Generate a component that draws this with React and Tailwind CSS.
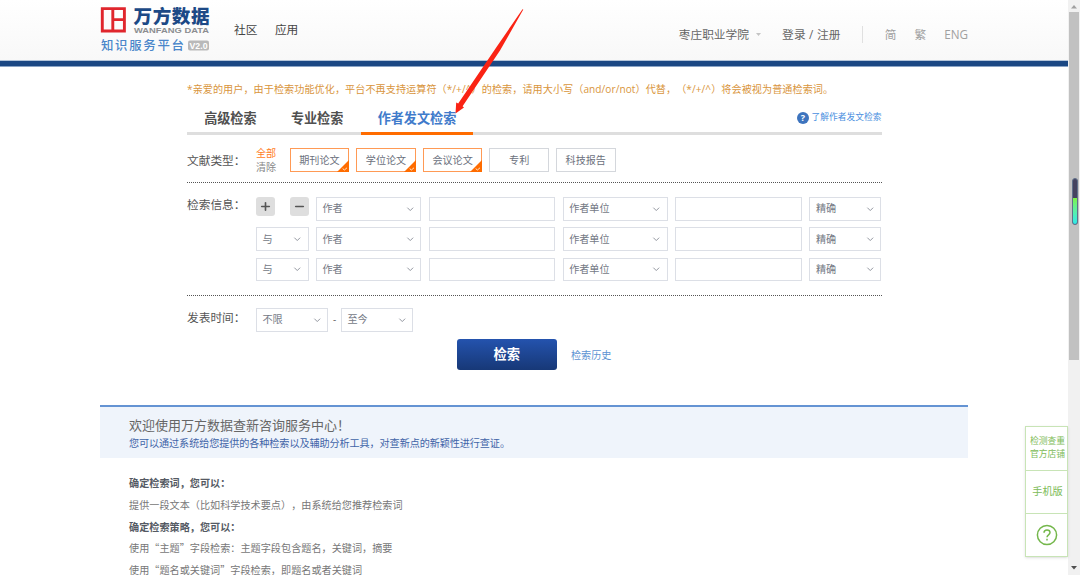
import React, { useState } from "react";
import { ChevronDown, Plus, Minus } from "lucide-react";

const docTypes = [
  { name: "期刊论文", checked: true },
  { name: "学位论文", checked: true },
  { name: "会议论文", checked: true },
  { name: "专利", checked: false },
  { name: "科技报告", checked: false },
];

const tabs = ["高级检索", "专业检索", "作者发文检索"];

const helpLines = [
  { text: "确定检索词，您可以：", bold: true },
  { text: "提供一段文本（比如科学技术要点），由系统给您推荐检索词" },
  { text: "确定检索策略，您可以：", bold: true },
  { text: "使用“主题”字段检索：主题字段包含题名，关键词，摘要" },
  { text: "使用“题名或关键词”字段检索，即题名或者关键词" },
];

const Logo = () => (
  <svg width="112" height="48" viewBox="0 0 112 48" className="shrink-0 overflow-visible">
    <path d="M2.3 2.6H24.4V25H2.3Z M12.8 2.6V25 M12.8 13.6H24.4" fill="none" stroke="#e0262d" strokeWidth="2.9" />
    <text x="33.5" y="16.6" fontSize="18.6" fontWeight="900" textLength="76" fill="#1c4986" fontFamily="Noto Sans CJK SC, sans-serif">万方数据</text>
    <text x="34" y="26.6" fontSize="7.8" fontWeight="700" textLength="75" lengthAdjust="spacingAndGlyphs" fill="#8b8d90" fontFamily="Liberation Sans, sans-serif">WANFANG DATA</text>
    <text x="1" y="43.5" fontSize="12.4" fontWeight="500" textLength="83" fill="#4a86ca" fontFamily="Noto Sans CJK SC, sans-serif">知识服务平台</text>
    <rect x="88" y="34.5" width="21" height="10" rx="2" fill="#b9b9b9" />
    <text x="89.5" y="42.8" fontSize="9" fontWeight="700" textLength="18" lengthAdjust="spacingAndGlyphs" fill="#fff" fontFamily="Liberation Sans, sans-serif">V2.0</text>
  </svg>
);

const Header = () => (
  <header className="h-[67px] shrink-0 border-b border-[#8aa4c6] bg-[#1b4884]">
    <div className="flex h-[61px] border-b border-[#b3c4d9] bg-gradient-to-b from-white to-[#f8f8f8] pl-[100px] text-[11.7px] leading-[18px]">
      <div className="pt-[6px]">
        <Logo />
      </div>
      <nav className="flex gap-[17.5px] pl-[22px] pt-[20px] text-[#444]">
        <a>社区</a>
        <a>应用</a>
      </nav>
      <div className="ml-auto flex items-start pr-[100px] pt-[25px] text-[#666]">
        <span>枣庄职业学院</span>
        <svg width="5" height="3" className="ml-[7px] mt-[8px]">
          <path d="M0 0H5L2.5 3Z" fill="#c4c4c4" />
        </svg>
        <span className="ml-[21px] whitespace-pre tracking-[0.25px]">登录 / 注册</span>
        <span className="ml-[21px] mt-[1px] h-[17px] w-px bg-[#e0e0e0]" />
        <span className="ml-[22px] text-[#a0a0a0]">简</span>
        <span className="ml-[18px] text-[#a0a0a0]">繁</span>
        <span className="ml-[18px] text-[#a0a0a0]">ENG</span>
      </div>
    </div>
  </header>
);

const Select = ({ value, className }) => (
  <div className={`flex h-[23.5px] shrink-0 items-center justify-between border border-[#dcdfe6] bg-white pl-[5.5px] pr-[5px] text-[#747985] ${className}`}>
    <span>{value}</span>
    <ChevronDown size={10.5} strokeWidth={2.2} className="text-[#8f939c]" />
  </div>
);

const TextInput = () => <input className="block h-[23.5px] w-[126.5px] shrink-0 border border-[#dcdfe6] bg-white px-2 outline-none" />;

const DocType = ({ name, checked, onClick }) => (
  <button
    onClick={onClick}
    className={`relative h-[24px] w-[59.8px] border bg-white pt-px text-[#6b707c] ${checked ? "border-[#ff9a55]" : "border-[#d4d7dc]"}`}
  >
    {name}
    {checked && (
      <svg width="12" height="12" viewBox="0 0 12 12" className="absolute -bottom-px -right-px">
        <path d="M12 0V12H0Z" fill="#ff6c00" />
        <path d="M5.7 8.6L7.4 10L10 7.8" fill="none" stroke="#fff" strokeWidth="0.8" />
      </svg>
    )}
  </button>
);

const Label = ({ children }) => <div className="w-[69px] shrink-0 text-[11.7px] leading-[18px] text-[#555]">{children}</div>;

const Scrollbar = () => (
  <div className="relative flex w-[12px] shrink-0 flex-col items-center justify-between bg-[#f1f1f1] py-[5px]">
    <svg width="6" height="4"><path d="M0 3.5L3 0L6 3.5Z" fill="#a0a0a0" /></svg>
    <svg width="6" height="4"><path d="M0 0L3 3.5L6 0Z" fill="#505050" /></svg>
    <div className="absolute left-[1px] top-[12px] h-[348px] w-[10px] bg-[#c1c1c1]" />
    <div className="absolute left-[4px] top-[178px] h-[47px] w-[6px] overflow-hidden rounded-full border border-[#60708a] bg-[#45435f]">
      <div className="mt-[19px] h-[27px] bg-gradient-to-b from-[#7cf43e] to-[#28e8ee]" />
    </div>
  </div>
);

const SideTools = () => (
  <aside className="absolute right-[12px] top-[426px] w-[43px] border border-[#c8e4b6] bg-white text-center text-[#7dbb58] shadow-sm">
    <div className="flex h-[43px] flex-col justify-center pb-[2px] pl-[2px] text-[8.8px] leading-[13px]">
      <span>检测查重</span>
      <span>官方店铺</span>
    </div>
    <div className="flex h-[43px] items-center justify-center border-t border-[#c8e4b6] pb-px pl-[2px] text-[10.2px]">手机版</div>
    <div className="flex h-[43px] items-center justify-center border-t border-[#c8e4b6] pl-px">
      <svg width="22" height="22" viewBox="0 0 22 22" fill="none" stroke="#74b74b" strokeWidth="1.5">
        <circle cx="11" cy="11" r="9.6" />
        <path d="M8 8.8C8 7 9.2 6 11 6S14 7 14 8.6C14 10.8 11 10.9 11 13.3" />
        <path d="M11 14.8V16.5" />
      </svg>
    </div>
  </aside>
);

export default function App() {
  const [types, setTypes] = useState(docTypes);
  const [activeTab, setActiveTab] = useState(2);

  const toggleType = (index) => {
    setTypes((prev) => prev.map((t, i) => (i === index ? { ...t, checked: !t.checked } : t)));
  };

  return (
    <div className="relative flex h-[575px] w-[1080px] overflow-hidden bg-white font-['Open_Sans','Noto_Sans_CJK_SC',sans-serif] text-[10.1px] [text-spacing-trim:space-all]">
      <div className="flex min-w-0 flex-1 flex-col">
        <Header />

        <main className="ml-[187px] h-[338px] w-[694.5px] shrink-0 whitespace-nowrap">
          <p className="pb-px pt-[14px] leading-[16px] tracking-[0.07px] text-[#d9953c]">
            *亲爱的用户，由于检索功能优化，平台不再支持运算符（*/+/^）的检索，请用大小写（and/or/not）代替，（*/+/^）将会被视为普通检索词。
          </p>

          {/* Tabs */}
          <div className="flex h-[37px] border-b-[3px] border-[#dedede]">
            {tabs.map((tab, i) => (
              <button
                key={tab}
                onClick={() => setActiveTab(i)}
                className={`-mb-[3px] flex h-[37px] items-start border-b-[3px] px-[17.2px] pt-[11px] text-[13.1px] font-bold leading-[19px] ${
                  activeTab === i ? "border-[#ff6c00] text-[#3f7bcb]" : "border-transparent text-[#505050]"
                }`}
              >
                {tab}
              </button>
            ))}
            <a className="ml-auto flex items-center gap-[3px] pt-[6px] text-[8.75px] text-[#4b8fe0]">
              <svg width="12" height="12" viewBox="0 0 12 12">
                <circle cx="6" cy="6" r="6" fill="#3d74be" />
                <text x="6" y="9.2" textAnchor="middle" fontSize="9" fontWeight="700" fill="#fff">?</text>
              </svg>
              了解作者发文检索
            </a>
          </div>

          {/* Document types */}
          <div className="flex h-[48px] items-start border-b border-dotted border-[#555] pt-[13px]">
            <div className="pt-[3px]">
              <Label>文献类型：</Label>
            </div>
            <div className="w-[34px] leading-[14px]">
              <div className="-mt-[2px] text-[#ff7d24]">全部</div>
              <div className="text-[#888]">清除</div>
            </div>
            <div className="-ml-[0.5px] flex gap-[6.8px]">
              {types.map((t, i) => (
                <DocType key={t.name} {...t} onClick={() => toggleType(i)} />
              ))}
            </div>
          </div>

          {/* Search conditions */}
          <div className="flex h-[113px] border-b border-dotted border-[#555] pt-[14px]">
            <div className="-mt-[2px]">
              <Label>检索信息：</Label>
            </div>
            <div className="flex flex-col gap-[6.9px]">
              {[0, 1, 2].map((row) => (
                <div key={row} className="flex gap-[7.5px]">
                  {row === 0 ? (
                    <div className="flex w-[52.5px] justify-between">
                      <button className="flex h-[19px] w-[19px] items-center justify-center rounded-[3px] bg-[#dedede] text-[#555]">
                        <Plus size={13} strokeWidth={3} />
                      </button>
                      <button className="flex h-[19px] w-[19px] items-center justify-center rounded-[3px] bg-[#dedede] text-[#555]">
                        <Minus size={13} strokeWidth={3} />
                      </button>
                    </div>
                  ) : (
                    <Select value="与" className="w-[52.5px]" />
                  )}
                  <Select value="作者" className="w-[105.2px]" />
                  <TextInput />
                  <Select value="作者单位" className="w-[105.2px]" />
                  <TextInput />
                  <Select value="精确" className="w-[72px]" />
                </div>
              ))}
            </div>
          </div>

          {/* Publish date */}
          <div className="flex h-[43px] items-start pt-[12px]">
            <Label>发表时间：</Label>
            <Select value="不限" className="w-[72px]" />
            <span className="w-[13px] text-center leading-[22px] text-[#666]">-</span>
            <Select value="至今" className="w-[72px]" />
          </div>

          <div className="flex items-center pl-[270px]">
            <button className="h-[30.5px] w-[99.5px] rounded-[3px] bg-gradient-to-b from-[#2453ae] to-[#173877] pt-[2px] text-[13.3px] font-bold text-white">检索</button>
            <a className="ml-[14.5px] pt-[2px] text-[#5c92d2]">检索历史</a>
          </div>
        </main>

        <section className="ml-[100px] h-[53px] w-[868px] shrink-0 border-t-2 border-[#6493d3] bg-[#eff4fb] pl-[29px] pt-[9px]">
          <h2 className="text-[13px] leading-[19px] text-[#666]">欢迎使用万方数据查新咨询服务中心！</h2>
          <p className="leading-[17px] tracking-[-0.07px] text-[#3f64a8]">您可以通过系统给您提供的各种检索以及辅助分析工具，对查新点的新颖性进行查证。</p>
        </section>

        <section className="shrink-0 pl-[129px] pt-[14.3px] font-['Noto_Sans_CJK_SC',sans-serif] leading-[21.7px] tracking-[0.04px] text-[#777]">
          {helpLines.map((line) => (
            <p key={line.text} className={line.bold ? "font-bold text-[#555a63]" : ""}>{line.text}</p>
          ))}
        </section>
      </div>

      <Scrollbar />
      <SideTools />

      <svg width="80" height="110" viewBox="0 0 80 110" className="pointer-events-none absolute left-[450px] top-[6px]">
        <path d="M73.3 3.5L50 44.5L12.6 100.3L14 101.6L5.5 107.5L6.2 96.5L8.2 97.4L46.2 41.5L72.5 3.2Z" fill="#fa2314" />
      </svg>
    </div>
  );
}
